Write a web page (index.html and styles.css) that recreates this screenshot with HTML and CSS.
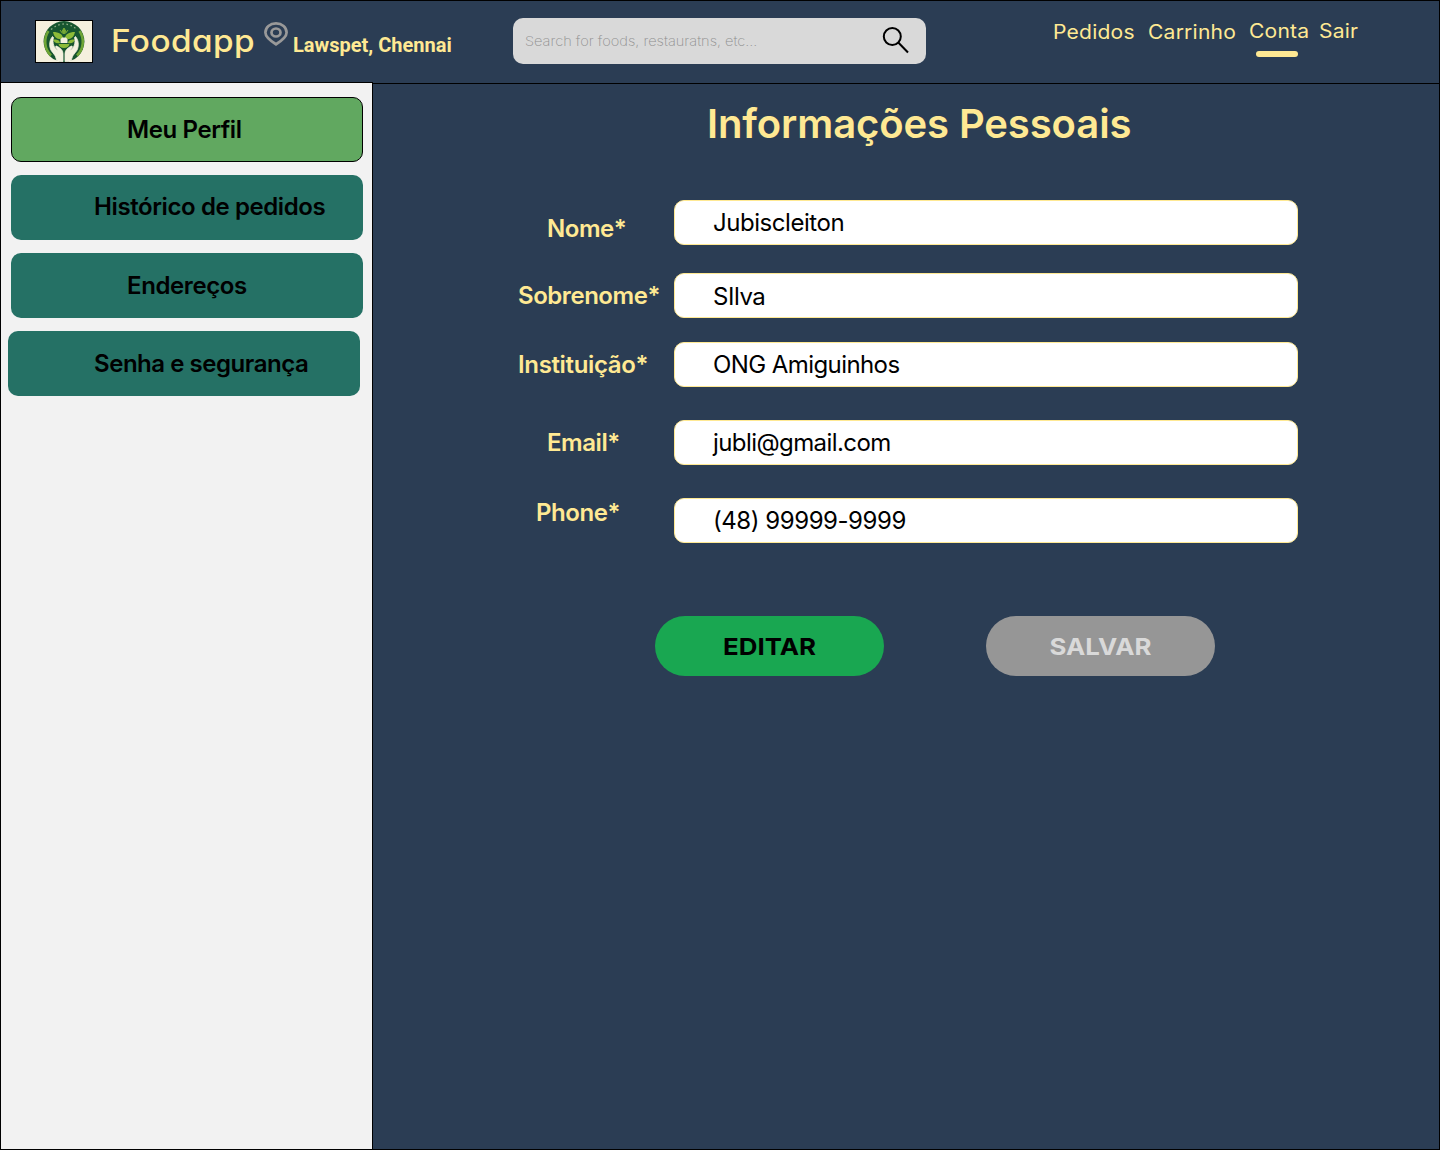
FILE: index.html
```html
<!DOCTYPE html>
<html lang="pt-BR">
<head>
<meta charset="utf-8">
<title>Foodapp - Meu Perfil</title>
<link rel="stylesheet" href="styles.css">
</head>
<body>
<div class="page">
  <header class="header">
    <svg class="logo" viewBox="0 0 58 43" role="img" aria-label="Foodapp">
      <rect x=".5" y=".5" width="57" height="42" fill="#f5f0de" stroke="#000"/>
      <circle cx="29" cy="21.500" r="20.400" fill="#17552f"/>
      <path d="M13.500 11C8.500 18 9 29 16 35.500M44.500 11C49.500 18 49 29 42 35.500" fill="none" stroke="#6fa536" stroke-width="2.600"/>
      <path d="M16 9.500Q29-1.500 42 9.500" fill="none" stroke="#8fae86" stroke-width="1.300" stroke-dasharray="1.600 2.600"/>
      <path d="M28 19C22 20 19 17 18 12C24 12 28 14 28 19ZM30 19C36 20 39 17 40 12C34 12 30 14 30 19ZM25 23C21 24 19 22 18 19.500C21 19 25 20 25 23ZM33 23C37 24 39 22 40 19.500C37 19 33 20 33 23Z" fill="#8dbb38"/>
      <path d="M29 8L31 11.500L29 14L27 11.500ZM25 10L27.500 13.500M33 10L30.500 13.500" fill="#78aa36" stroke="#78aa36"/>
      <path d="M27 17.500h4l1.500 2v3.500h-7v-3.500z" fill="#f4f1df"/>
      <path d="M23.500 24h11q-1 4-5.500 4t-5.500-4z" fill="#8dbb38"/>
      <path d="M17.500 16.500C14.500 20 14 25 15.500 29C17 33 21 34.500 21.500 40.500Q24.500 41.700 28 41.500V33.500C28 30 25 28 22.500 26.500C20.500 25.300 20 27 21.500 28.500L23 30.500C19 28 17 23 18.500 17.500ZM40.500 16.500C43.500 20 44 25 42.500 29C41 33 37 34.500 36.500 40.500Q33.500 41.700 30 41.500V33.500C30 30 33 28 35.500 26.500C37.500 25.300 38 27 36.500 28.500L35 30.500C39 28 41 23 39.500 17.500Z" fill="#f4f1df" stroke="#f4f1df" stroke-width=".8"/>
    </svg>
    <span class="brand">Foodapp</span>
    <svg class="pin" viewBox="0 0 24 24" fill="none" stroke="#999" stroke-width="2.700">
      <path d="M12 22.300C8 19.800 1.400 15.700 1.400 10.500C1.400 5.200 6 1.400 12 1.400S22.600 5.200 22.600 10.500C22.600 15.700 16 19.800 12 22.300Z"/>
      <ellipse cx="12" cy="10.500" rx="4.500" ry="4"/>
    </svg>
    <span class="place">Lawspet, Chennai</span>
    <div class="search">
      <span class="search-hint">Search for foods, restauratns, etc...</span>
      <svg class="search-icon" viewBox="0 0 27 27" fill="none" stroke="#000" stroke-width="2">
        <circle cx="10.300" cy="9.500" r="8.500"/>
        <path d="M16.300 15.500L26 25.500"/>
      </svg>
    </div>
    <nav class="nav">
      <a class="nav-orders"><span class="nav-text">Pedidos</span></a>
      <a class="nav-cart"><span class="nav-text">Carrinho</span></a>
      <a class="nav-account"><span class="nav-text">Conta</span></a>
      <a class="nav-exit"><span class="nav-text">Sair</span></a>
    </nav>
  </header>
  <div class="body">
    <aside class="sidebar">
      <a class="tab tab-active">Meu Perfil</a>
      <a class="tab tab-wide tab-history">Histórico de pedidos</a>
      <a class="tab">Endereços</a>
      <a class="tab tab-wide tab-security">Senha e segurança</a>
    </aside>
    <main class="content">
      <h1 class="title">Informações Pessoais</h1>
      <div class="form">
        <div class="row row-name"><span class="label">Nome*</span><div class="field">Jubiscleiton</div></div>
        <div class="row row-surname"><span class="label">Sobrenome*</span><div class="field">SIlva</div></div>
        <div class="row row-org"><span class="label">Instituição*</span><div class="field">ONG Amiguinhos</div></div>
        <div class="row row-email"><span class="label">Email*</span><div class="field">jubli@gmail.com</div></div>
        <div class="row row-phone"><span class="label">Phone*</span><div class="field">(48) 99999-9999</div></div>
      </div>
      <div class="actions">
        <button class="btn btn-edit"><span class="btn-text">EDITAR</span></button>
        <button class="btn btn-save"><span class="btn-text">SALVAR</span></button>
      </div>
    </main>
  </div>
</div>
</body>
</html>
```
FILE: styles.css
```css
* { box-sizing: border-box; }
body { margin: 0; font-family: Inter, sans-serif; }
.page {
  display: flex;
  flex-direction: column;
  height: 1150px;
  border: 1px solid #000;
  background: #2b3d54;
}
.header {
  display: flex;
  align-items: flex-start;
  flex: none;
  height: 83px;
  border-bottom: 1px solid #000;
  color: #ffe993;
  white-space: nowrap;
}
.logo { flex: none; width: 58px; height: 43px; margin: 19px 0 0 34px; }
.brand {
  width: 152px;
  margin: 20px 0 0 18px;
  font-size: 31px;
  font-weight: 500;
  line-height: 40px;
  letter-spacing: .4px;
  font-feature-settings: "cv11";
  transform: scaleX(1.075);
  transform-origin: left;
}
.pin { flex: none; width: 24px; height: 24px; margin: 21px 0 0 1px; }
.place {
  width: 220px;
  margin: 32px 0 0 5px;
  font: 700 20px/24px Roboto, sans-serif;
}
.search {
  display: flex;
  align-items: center;
  justify-content: space-between;
  width: 413px;
  height: 46px;
  margin-top: 17px;
  padding: 0 17px 0 12px;
  border-radius: 10px;
  background: #d9d9d9;
}
.search-hint {
  font-size: 13.5px;
  font-weight: 200;
  color: #8f8f8f;
  transform: scaleX(1.08);
  transform-origin: left;
}
.search-icon { width: 27px; height: 27px; margin-bottom: 2px; }
.nav {
  display: flex;
  margin: 19px 0 0 127px;
  font-size: 19.5px;
  line-height: 25px;
}
.nav-text {
  display: inline-block;
  letter-spacing: .2px;
  transform: scaleX(1.08);
  transform-origin: left;
}
.nav-orders { width: 95px; }
.nav-cart { width: 101px; }
.nav-account { position: relative; width: 70px; margin-top: -1px; }
.nav-account::after {
  content: "";
  position: absolute;
  left: 7px;
  top: 32px;
  width: 42px;
  height: 6px;
  border-radius: 3px;
  background: #ffe993;
}
.nav-exit { margin-top: -1px; }
.body { display: flex; flex: 1; }
.sidebar {
  display: flex;
  flex-direction: column;
  gap: 13px;
  width: 372px;
  margin-top: -2px;
  padding: 14px 0 0 10px;
  border-top: 1px solid #000;
  border-right: 1px solid #000;
  background: #f2f2f2;
}
.tab {
  width: 352px;
  height: 65px;
  padding-left: 116px;
  border-radius: 10px;
  background: #257165;
  font-size: 24px;
  font-weight: 600;
  letter-spacing: -.4px;
  line-height: 65px;
}
.tab-active {
  padding-left: 115px;
  border: 1px solid #000;
  background: #61a860;
  line-height: 64px;
}
.tab-wide { padding-left: 83px; }
.tab-history { line-height: 64px; }
.tab-security { margin-left: -3px; padding-left: 86px; letter-spacing: -.46px; }
.content { flex: 1; }
.title {
  margin: 15px 0 0 334px;
  font-size: 40px;
  font-weight: 600;
  letter-spacing: -.1px;
  line-height: 50px;
  color: #ffe993;
}
.form { margin: 51px 0 0 145px; }
.row { display: flex; align-items: center; height: 45px; }
.label {
  width: 156px;
  font-size: 24px;
  font-weight: 600;
  letter-spacing: -.45px;
  line-height: 30px;
  color: #ffe993;
}
.field {
  width: 624px;
  height: 45px;
  padding-left: 38px;
  border: 1px solid #ffe993;
  border-radius: 10px;
  background: #fff;
  font-size: 24px;
  letter-spacing: -.45px;
  line-height: 43px;
}
.row-name .label { padding-left: 29px; margin-top: 12px; }
.row-surname { margin-top: 28px; }
.row-surname .field { line-height: 45px; }
.row-org { margin-top: 24px; }
.row-org .label { letter-spacing: -.35px; }
.row-org .field, .row-email .field { letter-spacing: -.58px; }
.row-email { margin-top: 33px; }
.row-email .label { padding-left: 29px; }
.row-phone { margin-top: 33px; }
.row-phone .label { padding-left: 18px; margin-bottom: 16px; }
.actions { display: flex; gap: 102px; margin: 73px 0 0 282px; }
.btn {
  width: 229px;
  height: 60px;
  padding: 0;
  border: 0;
  border-radius: 30px;
  font: 700 23.5px/60px Inter, sans-serif;
}
.btn-text { display: block; padding-top: 1px; line-height: 59px; transform: scaleX(1.1); }
.btn-edit { background: #19a751; color: #000; }
.btn-save { background: #969696; color: #d9d9d9; }
```
